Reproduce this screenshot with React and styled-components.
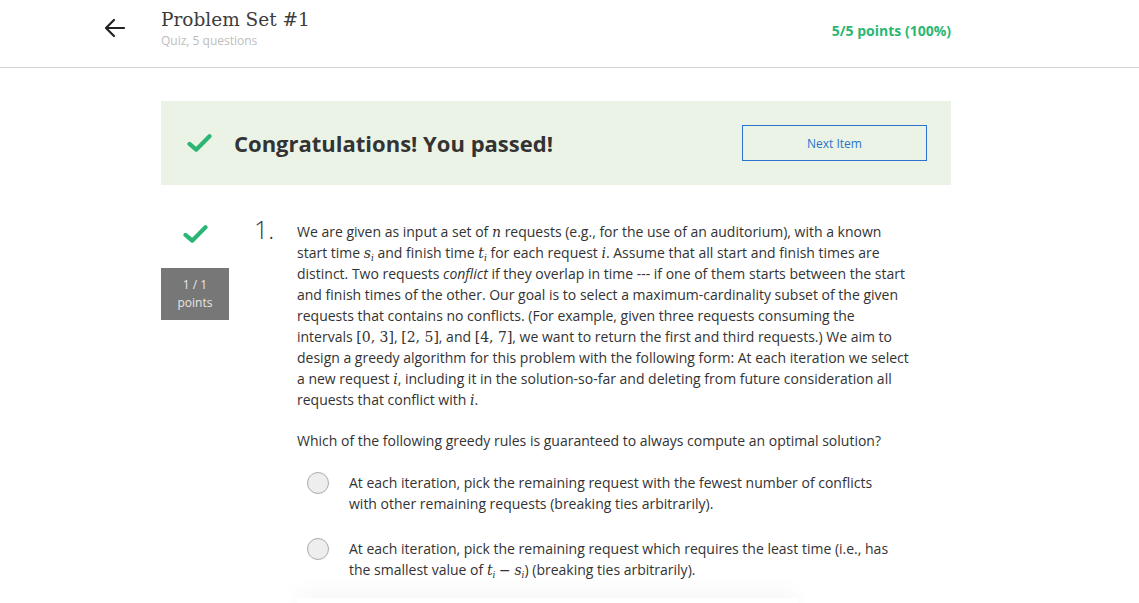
import React from 'react';
import styled, { createGlobalStyle } from 'styled-components';

const GlobalStyle = createGlobalStyle`
  html, body {
    margin: 0;
    padding: 0;
    background: #fff;
    font-family: 'Open Sans', 'Liberation Sans', sans-serif;
    color: #333;
    overflow: hidden;
  }
`;

const Header = styled.header`
  height: 68px;
  border-bottom: 1px solid #d6d6d6;
  display: flex;
  align-items: flex-start;
  padding: 0 188px 0 104px;
  box-sizing: border-box;
`;

const BackButton = styled.div`
  width: 57px;
  padding-top: 17px;
  color: #222;
`;

const TitleBlock = styled.div`
  flex: 1;
  padding-top: 6px;
`;

const Title = styled.h1`
  margin: 0;
  font-family: 'DejaVu Serif', 'Liberation Serif', serif;
  font-weight: normal;
  font-size: 18.5px;
  line-height: 27px;
  color: #3c3c3c;
`;

const Subtitle = styled.div`
  font-size: 12px;
  line-height: 16px;
  color: #bdbdbd;
`;

const Score = styled.div`
  padding-top: 21px;
  font-size: 14px;
  font-weight: 700;
  color: #2bb673;
`;

const Main = styled.main`
  width: 790px;
  margin-left: 161px;
  padding-top: 33px;
`;

const Banner = styled.div`
  height: 84px;
  background: #ebf3e6;
  display: flex;
  align-items: center;
  padding: 0 24px 0 26px;
  box-sizing: border-box;
`;

const BannerText = styled.h2`
  flex: 1;
  margin: 0 0 0 22px;
  font-size: 22px;
  font-weight: 700;
  color: #333;
`;

const NextButton = styled.button`
  width: 185px;
  height: 36px;
  border: 1px solid #2a73cc;
  background: transparent;
  color: #2a73cc;
  font-family: 'Open Sans', 'Liberation Sans', sans-serif;
  font-size: 12px;
  cursor: pointer;
`;

const Question = styled.section`
  display: grid;
  grid-template-columns: 95px 41px 615px;
  margin-top: 36px;
`;

const Status = styled.div`
  width: 68px;
  display: flex;
  flex-direction: column;
  align-items: center;
  padding-top: 3px;
`;

const PointsBox = styled.div`
  margin-top: 24px;
  width: 68px;
  height: 52px;
  background: #777;
  color: #e6e6e6;
  font-size: 12px;
  line-height: 18px;
  display: flex;
  flex-direction: column;
  align-items: center;
  justify-content: center;
`;

const Number = styled.div`
  font-size: 25px;
  font-weight: 300;
  line-height: 20px;
  color: #333;
  margin: -2px 0 0 -2px;
`;

const Body = styled.div`
  font-size: 14px;
  line-height: 21px;
  color: #333;
`;

const Para = styled.p`
  margin: 0 0 20px;
`;

const M = styled.span`
  font-family: 'DejaVu Serif', 'Liberation Serif', serif;
  font-style: ${(p) => (p.upright ? 'normal' : 'italic')};
  font-size: 14px;
  line-height: 1;
`;

const Sub = styled.span`
  font-size: 9px;
  line-height: 0;
  position: relative;
  top: 3px;
`;

const Option = styled.label`
  display: flex;
  align-items: flex-start;
  padding-left: 10px;
  margin-top: ${(p) => (p.first ? '21px' : '24px')};
`;

const OptionText = styled.span`
  max-width: 545px;
`;

const Radio = styled.span`
  flex: none;
  width: 20px;
  height: 20px;
  border-radius: 50%;
  border: 1px solid #aaa;
  background: #eee;
  margin-right: 20px;
`;

const Fade = styled.div`
  margin-top: 18px;
  width: 500px;
  height: 40px;
  box-shadow: 0 -8px 20px rgba(0, 0, 0, 0.03);
`;

const Check = ({ size = 24 }) => (
  <svg width={size} height={size * 0.8} viewBox="0 0 30 24">
    <path
      d="M3 13 L11 20 L27 4"
      fill="none"
      stroke="#2bb673"
      strokeWidth="5"
      strokeLinecap="round"
      strokeLinejoin="round"
    />
  </svg>
);

const Arrow = () => (
  <svg width="22" height="22" viewBox="0 0 22 22">
    <path
      d="M20 11 H3 M10 3 L2 11 L10 19"
      fill="none"
      stroke="#222"
      strokeWidth="2.2"
      strokeLinecap="round"
      strokeLinejoin="round"
    />
  </svg>
);

function App() {
  return (
    <>
      <GlobalStyle />
      <Header>
        <BackButton>
          <Arrow />
        </BackButton>
        <TitleBlock>
          <Title>Problem Set #1</Title>
          <Subtitle>Quiz, 5 questions</Subtitle>
        </TitleBlock>
        <Score>5/5 points (100%)</Score>
      </Header>
      <Main>
        <Banner>
          <Check size={25} />
          <BannerText>Congratulations! You passed!</BannerText>
          <NextButton>Next Item</NextButton>
        </Banner>
        <Question>
          <Status>
            <Check size={25} />
            <PointsBox>
              <span>1 / 1</span>
              <span>points</span>
            </PointsBox>
          </Status>
          <Number>1.</Number>
          <Body>
            <Para>
              We are given as input a set of <M>n</M> requests (e.g., for the use of an
              auditorium), with a known start time <M>s<Sub>i</Sub></M> and finish time{' '}
              <M>t<Sub>i</Sub></M> for each request <M>i</M>. Assume that all start and
              finish times are distinct. Two requests <em>conflict</em> if they overlap in
              time --- if one of them starts between the start and finish times of the
              other. Our goal is to select a maximum-cardinality subset of the given requests
              that contains no conflicts. (For example, given three requests consuming the
              intervals <M upright>[0, 3]</M>, <M upright>[2, 5]</M>, and{' '}
              <M upright>[4, 7]</M>, we want to return the first and third requests.) We aim
              to design a greedy algorithm for this problem with the following form: At each
              iteration we select a new request <M>i</M>, including it in the
              solution-so-far and deleting from future consideration all requests that
              conflict with <M>i</M>.
            </Para>
            <Para>
              Which of the following greedy rules is guaranteed to always compute an optimal
              solution?
            </Para>
            <Option first>
              <Radio />
              <OptionText>
                At each iteration, pick the remaining request with the fewest number of
                conflicts with other remaining requests (breaking ties arbitrarily).
              </OptionText>
            </Option>
            <Option>
              <Radio />
              <OptionText>
                At each iteration, pick the remaining request which requires the least time
                (i.e., has the smallest value of <M>t<Sub>i</Sub></M> <M upright>−</M>{' '}
                <M>s<Sub>i</Sub></M>) (breaking ties arbitrarily).
              </OptionText>
            </Option>
            <Fade />
          </Body>
        </Question>
      </Main>
    </>
  );
}

export default App;
